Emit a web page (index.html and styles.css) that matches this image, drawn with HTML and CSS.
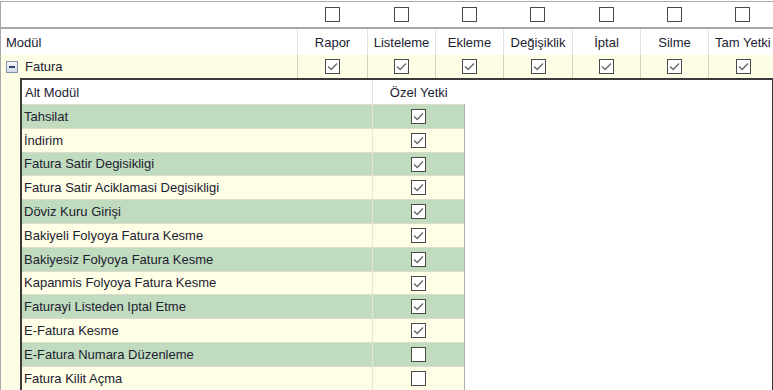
FILE: index.html
```html
<!DOCTYPE html>
<html lang="tr">
<head>
    <meta charset="UTF-8">
    <title>Modül Yetkileri</title>
    <link rel="stylesheet" href="styles.css">
</head>
<body>
    <div class="grid">
        <div class="row filter">
            <div class="cell"></div>
            <div class="cell"><span class="chk"></span></div>
            <div class="cell"><span class="chk"></span></div>
            <div class="cell"><span class="chk"></span></div>
            <div class="cell"><span class="chk"></span></div>
            <div class="cell"><span class="chk"></span></div>
            <div class="cell"><span class="chk"></span></div>
            <div class="cell"><span class="chk"></span></div>
        </div>
        <div class="row head">
            <div class="cell name">Modül</div>
            <div class="cell">Rapor</div>
            <div class="cell">Listeleme</div>
            <div class="cell">Ekleme</div>
            <div class="cell">Değişiklik</div>
            <div class="cell">İptal</div>
            <div class="cell">Silme</div>
            <div class="cell">Tam Yetki</div>
        </div>
        <div class="row group">
            <div class="cell name"><span class="toggle"></span>Fatura</div>
            <div class="cell"><span class="chk on"></span></div>
            <div class="cell"><span class="chk on"></span></div>
            <div class="cell"><span class="chk on"></span></div>
            <div class="cell"><span class="chk on"></span></div>
            <div class="cell"><span class="chk on"></span></div>
            <div class="cell"><span class="chk on"></span></div>
            <div class="cell"><span class="chk on"></span></div>
        </div>
        <div class="detail">
            <div class="panel">
                <table class="sub">
                    <thead>
                        <tr>
                            <th class="sub-name">Alt Modül</th>
                            <th>Özel Yetki</th>
                        </tr>
                    </thead>
                    <tbody id="subList"></tbody>
                </table>
            </div>
        </div>
    </div>

    <script>
        // alt modül listesi
        const items = [
            ['Tahsilat', true],
            ['İndirim', true],
            ['Fatura Satir Degisikligi', true],
            ['Fatura Satir Aciklamasi Degisikligi', true],
            ['Döviz Kuru Girişi', true],
            ['Bakiyeli Folyoya Fatura Kesme', true],
            ['Bakiyesiz Folyoya Fatura Kesme', true],
            ['Kapanmis Folyoya Fatura Kesme', true],
            ['Faturayi Listeden Iptal Etme', true],
            ['E-Fatura Kesme', true],
            ['E-Fatura Numara Düzenleme', false],
            ['Fatura Kilit Açma', false]
        ];

        const checkSvg = '<svg viewBox="0 0 15 15" width="15" height="15"><path d="M3 7.5 L6.2 10.5 L12 4.5" fill="none" stroke="#6a6a6a" stroke-width="1.4"/></svg>';

        document.querySelectorAll('.chk.on').forEach(function(el) {
            el.innerHTML = checkSvg;
        });

        let list = document.getElementById('subList');
        items.forEach(function(item, i) {
            let row = list.insertRow();
            row.className = i % 2 === 0 ? 'even' : 'odd';
            row.insertCell(0).innerText = item[0];
            let c = row.insertCell(1);
            let box = document.createElement('span');
            box.className = 'chk';
            if (item[1]) box.innerHTML = checkSvg;
            c.appendChild(box);
        });
    </script>
</body>
</html>
```

FILE: styles.css
```css
body {
    margin: 0;
    padding-top: 1px;
    font-family: 'Liberation Sans', Arial, sans-serif;
    font-size: 13px;
    color: #1c2230;
    background: #fff;
    overflow: hidden;
}
.grid {
    width: 780px;
    border-top: 1px solid #a8a8a8;
    border-left: 1px solid #a8a8a8;
}
.row {
    display: grid;
    grid-template-columns: 296px 70px 68px 68px 69px 68px 68px 69px;
}
.cell {
    display: flex;
    align-items: center;
    justify-content: center;
    white-space: nowrap;
    overflow: hidden;
}
.cell.name {
    justify-content: flex-start;
    padding-left: 5px;
}
.filter {
    height: 25px;
    border-bottom: 2px solid #a8a8a8;
}
.head {
    height: 26px;
}
.head .cell:last-child {
    justify-content: flex-start;
    padding-left: 6px;
}
.head .cell + .cell {
    border-left: 1px solid #e2e2e2;
}
.group {
    height: 23px;
    background: #fdfde6;
}
.group .cell + .cell {
    border-left: 1px solid #cfcfc0;
}
.toggle {
    position: relative;
    width: 10px;
    height: 10px;
    margin-right: 7px;
    border: 1px solid #8393a6;
    background: linear-gradient(#f4f6fa, #d3dae6);
}
.toggle::after {
    content: '';
    position: absolute;
    left: 2px;
    top: 4px;
    width: 6px;
    height: 2px;
    background: #33466e;
}
.chk {
    display: inline-block;
    width: 15px;
    height: 15px;
    box-sizing: border-box;
    border: 1px solid #4a4a4a;
    background: #fff;
    position: relative;
}
.chk svg {
    position: absolute;
    left: -1px;
    top: -1px;
}
.detail {
    background: #fdfde6;
    padding-left: 19px;
}
.panel {
    width: 750px;
    height: 320px;
    background: #fff;
    border-top: 2px solid #3a3a3a;
    border-left: 2px solid #3a3a3a;
    border-right: 1px solid #3a3a3a;
}
.sub {
    border-collapse: collapse;
    table-layout: fixed;
    width: 443px;
}
.sub th {
    height: 24px;
    padding: 0;
    font-weight: normal;
    background: #fff;
    border-left: 1px solid #e2e2e2;
}
.sub th.sub-name {
    text-align: left;
    padding-left: 3px;
    width: 347px;
    border-left: none;
}
.sub td {
    height: 22.8px;
    padding: 0 0 0 2px;
    border-top: 1px solid #dcdccc;
    border-right: 1px solid #b0b0a8;
}
.sub td + td {
    text-align: center;
    padding: 0;
    vertical-align: middle;
}
.sub td:first-child {
    border-right: 1px solid #e6e6d6;
}
.sub td .chk {
    vertical-align: middle;
    margin-top: -2px;
}
.sub tr.even td {
    background: #c1dbbf;
}
.sub tr.odd td {
    background: #fefee6;
}
```
